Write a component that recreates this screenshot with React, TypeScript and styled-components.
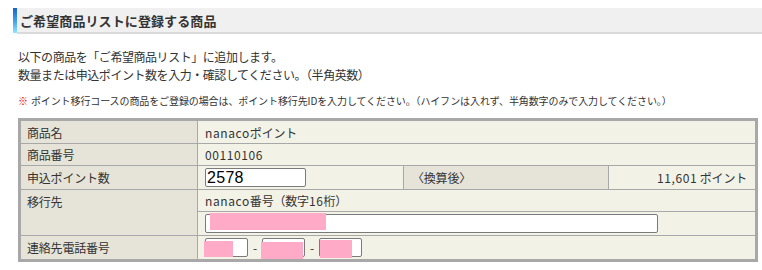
import React from "react";
import styled, { createGlobalStyle } from "styled-components";

const Global = createGlobalStyle`
  html, body { margin: 0; padding: 0; background: #fff; }
  body { font-family: "Noto Sans CJK JP", "Noto Sans", sans-serif; color: #333; }
`;

const Page = styled.div`
  display: flex;
  flex-direction: column;
  padding: 8px 0 0 13px;
`;

const Heading = styled.div`
  display: flex;
  height: 26px;
`;

const Strip = styled.div`
  width: 4px;
  height: 25px;
  background: linear-gradient(to bottom, #1a63c9 0%, #3f9ee8 50%, #8fe6ff 100%);
`;

const Title = styled.h1`
  flex: 1;
  margin: 0;
  padding-left: 3px;
  display: flex;
  align-items: center;
  background: #f0f0f0;
  border-bottom: 2px solid #dadada;
  box-sizing: border-box;
  height: 26px;
  font-size: 13px;
  font-weight: 700;
  color: #333;
  letter-spacing: 0.1px;
`;

const Body = styled.div`
  display: flex;
  flex-direction: column;
  padding-left: 5px;
`;

const Intro = styled.p`
  margin: 14px 0 0;
  font-size: 12px;
  line-height: 18px;
  letter-spacing: -0.45px;
  color: #333;
`;

const Note = styled.p`
  margin: 10px 0 0;
  font-size: 10px;
  line-height: 14px;
  letter-spacing: -0.1px;
  color: #333;
`;

const Mark = styled.span`
  color: #e00000;
  margin-right: 3px;
`;

const Grid = styled.div`
  margin-top: 10px;
  width: 734px;
  display: grid;
  grid-template-columns: 176px 205px 204px 146px;
  grid-template-rows: 22px 21px 23px 21px 23px 23px;
  gap: 1px;
  background: #a8a8a8;
  border: 3px solid #a8a8a8;
`;

const Cell = styled.div<{ $head?: boolean; $span?: number; $rows?: number; $right?: boolean; $top?: boolean }>`
  background: ${(p) => (p.$head ? "#e6e4d8" : "#f3f2e7")};
  grid-column: ${(p) => (p.$span ? `span ${p.$span}` : "auto")};
  grid-row: ${(p) => (p.$rows ? `span ${p.$rows}` : "auto")};
  display: flex;
  align-items: ${(p) => (p.$top ? "flex-start" : "center")};
  justify-content: ${(p) => (p.$right ? "flex-end" : "flex-start")};
  padding: ${(p) => (p.$top ? "3px 8px 0 6px" : p.$head ? "0 8px 0 6px" : "0 8px 0 7px")};
  font-size: 12px;
  letter-spacing: -0.2px;
  color: #333;
  white-space: nowrap;
`;

const Latin = styled.span`
  letter-spacing: 0.6px;
`;

const Field = styled.div<{ $w: number }>`
  position: relative;
  width: ${(p) => p.$w}px;
  height: 19px;
  box-sizing: border-box;
  border: 1px solid #7a7a7a;
  border-radius: 2px;
  background: #fff;
  display: flex;
  align-items: center;
  padding-left: 1px;
  font-family: "Liberation Sans", Arial, sans-serif;
  font-size: 16px;
  color: #000;
  letter-spacing: 0.3px;
`;

const Redact = styled.span`
  position: absolute;
  background: #ffabc8;
`;

const Dash = styled.span`
  margin: 0 5px 0 5px;
  font-size: 12px;
  color: #333;
`;

const PhoneRow = styled.div`
  display: flex;
  align-items: center;
`;

export default function App() {
  return (
    <>
      <Global />
      <Page>
        <Heading>
          <Strip />
          <Title>ご希望商品リストに登録する商品</Title>
        </Heading>
        <Body>
          <Intro>
            以下の商品を「ご希望商品リスト」に追加します。
            <br />
            数量または申込ポイント数を入力・確認してください。（半角英数）
          </Intro>
          <Note>
            <Mark>※</Mark>
            ポイント移行コースの商品をご登録の場合は、ポイント移行先IDを入力してください。（ハイフンは入れず、半角数字のみで入力してください。）
          </Note>
          <Grid>
            <Cell $head>商品名</Cell>
            <Cell $span={3}><Latin>nanaco</Latin>ポイント</Cell>

            <Cell $head>商品番号</Cell>
            <Cell $span={3}><Latin>00110106</Latin></Cell>

            <Cell $head>申込ポイント数</Cell>
            <Cell>
              <Field $w={101}>2578</Field>
            </Cell>
            <Cell $head style={{ paddingLeft: 8 }}>〈換算後〉</Cell>
            <Cell $right><Latin>11,601</Latin>&nbsp;ポイント</Cell>

            <Cell $head $rows={2} $top>移行先</Cell>
            <Cell $span={3}><Latin>nanaco</Latin>番号（数字<Latin>16</Latin>桁）</Cell>
            <Cell $span={3}>
              <Field $w={453}>
                <Redact style={{ left: 4, top: -2, width: 116, height: 17 }} />
              </Field>
            </Cell>

            <Cell $head>連絡先電話番号</Cell>
            <Cell $span={3}>
              <PhoneRow>
                <Field $w={43}>
                  <Redact style={{ left: -2, top: 2, width: 29, height: 16 }} />
                </Field>
                <Dash>-</Dash>
                <Field $w={43}>
                  <Redact style={{ left: -2, top: 3, width: 42, height: 17 }} />
                </Field>
                <Dash>-</Dash>
                <Field $w={43}>
                  <Redact style={{ left: 0, top: 1, width: 32, height: 18 }} />
                </Field>
              </PhoneRow>
            </Cell>
          </Grid>
        </Body>
      </Page>
    </>
  );
}
